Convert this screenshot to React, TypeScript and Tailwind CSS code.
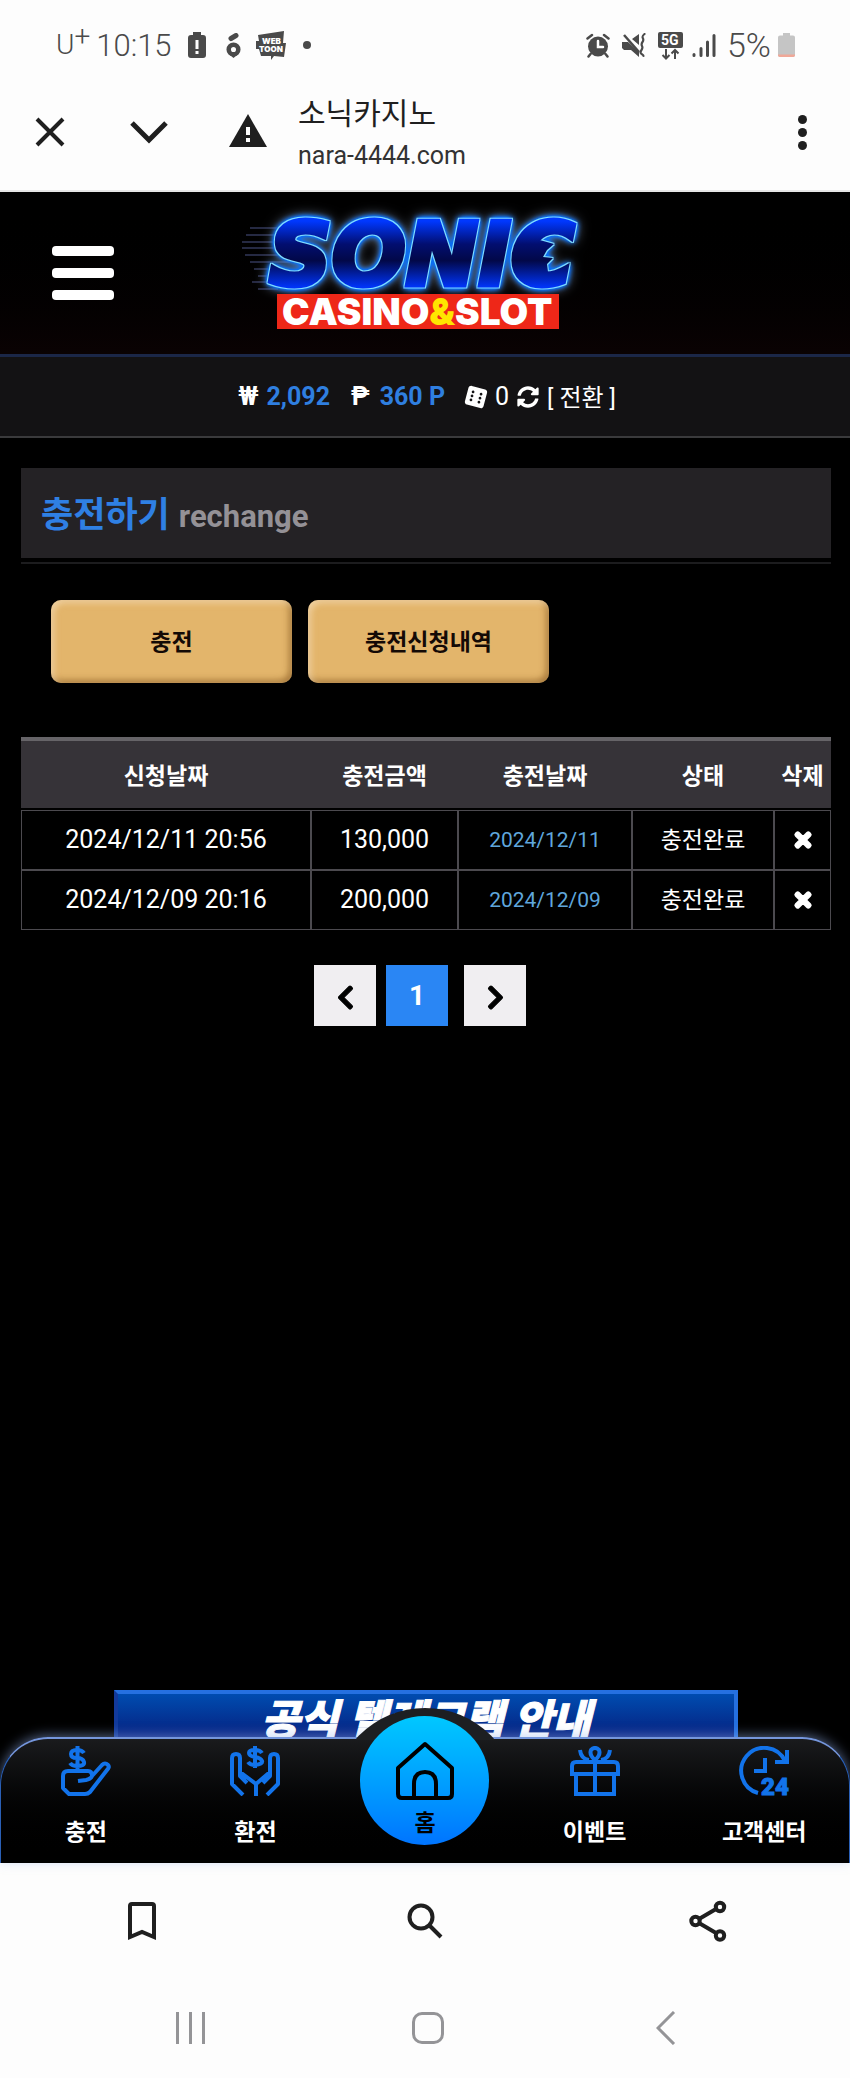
import React from 'react';
import { FaChevronLeft, FaChevronRight, FaDiceSix, FaSyncAlt, FaTimes } from 'react-icons/fa';

const RECHARGES = [
  { requested: '2024/12/11 20:56', amount: '130,000', charged: '2024/12/11', status: '충전완료' },
  { requested: '2024/12/09 20:16', amount: '200,000', charged: '2024/12/09', status: '충전완료' },
];

const StatusBar: React.FC = () => (
  <div className="flex h-[90px] items-center justify-between pl-[56px] pr-[55px] font-light leading-none text-[#4a4a4a]">
    <div className="flex items-center text-[31px]">
      <span className="flex items-start text-[28px]">
        U<span className="-mt-2">+</span>
      </span>
      <span className="ml-[6px]">10:15</span>
      <svg className="ml-[16px] h-[26px] w-[18px]" viewBox="0 0 18 26" fill="#4a4a4a">
        <path d="M5 0h8v3h2a3 3 0 0 1 3 3v17a3 3 0 0 1-3 3H3a3 3 0 0 1-3-3V6a3 3 0 0 1 3-3h2z" />
        <path d="M7.5 8h3v9h-3zM7.5 19h3v3h-3z" fill="#fff" />
      </svg>
      <svg className="ml-[20px] h-[25px] w-[15px]" viewBox="0 0 15 25" fill="none" stroke="#4a4a4a">
        <circle cx="7.5" cy="16.5" r="4.8" strokeWidth="4.5" />
        <path d="M5 5.500l5-3" strokeWidth="5" strokeLinecap="round" />
        <path d="M4 22h7l-3.500 3z" fill="#4a4a4a" stroke="none" />
      </svg>
      <svg className="ml-[14px] h-[30px] w-[32px]" viewBox="0 0 32 30" fill="#4a4a4a">
        <path d="M3 5L29 1l-1 12h3l-2 14-10-1-3 4v-4L6 26 4 19H1v-8h3z" />
        <text x="7" y="14" fill="#fff" fontSize="8" fontWeight="900" fontFamily="Inter, sans-serif">WEB</text>
        <text x="4" y="22" fill="#fff" fontSize="8" fontWeight="900" fontFamily="Inter, sans-serif">TOON</text>
      </svg>
      <span className="ml-[16px] h-2 w-2 rounded-full bg-[#4a4a4a]" />
    </div>
    <div className="flex items-center text-[34px]">
      <svg className="h-[25px] w-[24px]" viewBox="0 0 24 25" fill="none" stroke="#4a4a4a" strokeLinecap="round">
        <circle cx="12" cy="13.5" r="10" fill="#4a4a4a" stroke="none" />
        <path d="M1.500 5.500L6 2M22.500 5.500L18 2M4.500 21L2.500 23.500M19.500 21l2 2.500" strokeWidth="2.5" />
        <path d="M12 8v6h5" stroke="#fff" strokeWidth="2.5" />
      </svg>
      <svg className="ml-[12px] h-[25px] w-[24px]" viewBox="0 0 24 25" fill="#4a4a4a">
        <path d="M0 9h6l11 10v5l-8-7H2l-2-2zM10 6l7-5v11z" />
        <path d="M2 2l15 17" stroke="#4a4a4a" strokeWidth="2.500" />
        <path d="M22.500 1c-5 4 1 4-2 8s2 4-1 8 2 4 2 6" fill="none" stroke="#4a4a4a" strokeWidth="2.2" strokeLinecap="round" />
      </svg>
      <svg className="ml-[12px] h-[29px] w-[25px]" viewBox="0 0 25 29" fill="#4a4a4a">
        <rect x="0" y="1" width="25" height="16" rx="2" />
        <text x="3" y="14" fill="#fff" fontSize="14" fontWeight="700" fontFamily="Roboto, sans-serif">5G</text>
        <path d="M8 18v9M4.500 24L8 27.500l3.500-3.500M17 28v-8M13.500 22.500L17 19l3.500 3.500" fill="none" stroke="#4a4a4a" strokeWidth="2" />
      </svg>
      <svg className="ml-[9px] h-[25px] w-[24px]" viewBox="0 0 24 25" fill="none" stroke="#4a4a4a" strokeWidth="3" strokeLinecap="round">
        <path d="M2 21.500v1M9 15.500v7M15.500 9v13.500M22 2.500v20" />
      </svg>
      <span className="ml-[11px]">5%</span>
      <svg className="ml-[7px] h-[24px] w-[17px]" viewBox="0 0 17 24">
        <path d="M5 0h7v2.500h3a2 2 0 0 1 2 2V22a2 2 0 0 1-2 2H2a2 2 0 0 1-2-2V4.500a2 2 0 0 1 2-2h3z" fill="#c5c5c5" />
        <path d="M0 21.500h17a2 2 0 0 1-2 2.500H2a2 2 0 0 1-2-2.500z" fill="#f0a898" />
      </svg>
    </div>
  </div>
);

const BrowserBar: React.FC = () => (
  <div className="flex h-[102px] items-center border-b-2 border-[#e6e6e6] pb-[16px] pl-[35px] pr-[43px] text-[#1f1f1f]">
    <button aria-label="닫기">
      <svg className="h-[30px] w-[30px]" viewBox="0 0 30 30" fill="none" stroke="currentColor" strokeWidth="4">
        <path d="M2 2l26 26M28 2L2 28" />
      </svg>
    </button>
    <button aria-label="내리기" className="ml-[65px]">
      <svg className="h-[24px] w-[38px]" viewBox="0 0 38 24" fill="none" stroke="currentColor" strokeWidth="5">
        <path d="M2 3l17 17L36 3" />
      </svg>
    </button>
    <svg className="mb-1 ml-[61px] h-[33px] w-[38px]" viewBox="0 0 38 33" fill="currentColor">
      <path d="M19 0l19 33H0z" />
      <path d="M17 13h4v8h-4zM17 24h4v4h-4z" fill="#fff" />
    </svg>
    <div className="ml-[31px] grow pt-1">
      <p className="text-[30px] leading-[44px]">소닉카지노</p>
      <p className="text-[25px] leading-[40px] text-[#333]">nara-4444.com</p>
    </div>
    <button aria-label="메뉴 더보기" className="flex flex-col gap-1">
      <span className="h-[9px] w-[9px] rounded-full bg-current" />
      <span className="h-[9px] w-[9px] rounded-full bg-current" />
      <span className="h-[9px] w-[9px] rounded-full bg-current" />
    </button>
  </div>
);

const Logo: React.FC = () => (
  <svg className="h-[133px] w-[370px] overflow-visible" viewBox="0 0 370 133">
    <defs>
      <linearGradient id="sonicFill" gradientUnits="userSpaceOnUse" x1="0" y1="14" x2="0" y2="80">
        <stop offset="0" stopColor="#0038ff" />
        <stop offset="0.35" stopColor="#020e70" />
        <stop offset="0.6" stopColor="#020848" />
        <stop offset="1" stopColor="#0034f8" />
      </linearGradient>
      <filter id="neon" x="-15%" y="-20%" width="130%" height="140%" colorInterpolationFilters="sRGB">
        <feGaussianBlur in="SourceAlpha" stdDeviation="7" result="wide" />
        <feFlood floodColor="#a9bede" floodOpacity="0.9" />
        <feComposite in2="wide" operator="in" result="haze" />
        <feGaussianBlur in="SourceAlpha" stdDeviation="3" result="near" />
        <feComponentTransfer in="near" result="nearHard">
          <feFuncA type="linear" slope="3" />
        </feComponentTransfer>
        <feFlood floodColor="#0b6df0" />
        <feComposite in2="nearHard" operator="in" result="halo" />
        <feMorphology in="SourceAlpha" operator="dilate" radius="1" result="edge" />
        <feFlood floodColor="#7fdcff" />
        <feComposite in2="edge" operator="in" result="line" />
        <feMerge>
          <feMergeNode in="haze" />
          <feMergeNode in="halo" />
          <feMergeNode in="line" />
          <feMergeNode in="SourceGraphic" />
        </feMerge>
      </filter>
    </defs>
    <path
      d="M10 21h40M6 28h44M2 35h44M2 41h44M5 48h42M10 55h40M14 62h26M18 69h20M12 75h20M18 82h20"
      stroke="#4b5284"
      strokeWidth="1"
    />
    <g filter="url(#neon)" fill="url(#sonicFill)">
      <text
        x="29"
        y="78"
        stroke="url(#sonicFill)"
        strokeWidth="5"
        fontFamily="'DejaVu Sans', sans-serif"
        fontSize="87"
        fontWeight="700"
        fontStyle="italic"
      >
        SONIC
      </text>
      <path d="M296 32l18 5-7 6-4 7 10 1-6 6 1 8-14 2-7-15z" />
    </g>
    <rect x="37" y="87" width="282" height="35" fill="#ee2718" />
    <text x="42" y="118" fill="#fff" fontFamily="Inter, sans-serif" fontSize="37" fontWeight="900">
      CASINO<tspan fill="#ffe600">&amp;</tspan>SLOT
    </text>
  </svg>
);

const SiteHeader: React.FC = () => (
  <header className="grid h-[165px] grid-cols-[1fr_auto_1fr] items-center border-b-[3px] border-[#1b2748] bg-gradient-to-b from-black to-[#0a0203] pl-[52px] pr-[52px]">
    <button aria-label="전체 메뉴" className="flex w-[62px] flex-col gap-3">
      <span className="h-[10px] rounded-sm bg-white" />
      <span className="h-[10px] rounded-sm bg-white" />
      <span className="h-[10px] rounded-sm bg-white" />
    </button>
    <a href="#" aria-label="Sonic Casino & Slot">
      <Logo />
    </a>
  </header>
);

const BalanceBar: React.FC = () => (
  <div className="flex h-[81px] items-center justify-center border-b-2 border-[#3a3a3c] bg-[#131214] pl-1 text-[25px] text-white">
    <span className="font-bold">₩</span>
    <span className="ml-2 font-bold text-[#2f7fe0]">2,092</span>
    <span className="ml-[21px] font-bold">₱</span>
    <span className="ml-[10px] font-bold text-[#2f7fe0]">360 P</span>
    <FaDiceSix className="ml-[20px] h-[22px] w-[22px] rotate-15" />
    <span className="ml-2">0</span>
    <button className="flex items-center">
      <FaSyncAlt className="ml-2 mr-2 h-[22px] w-[22px]" />
      <span className="pt-[2px] text-[24px]">[ 전환 ]</span>
    </button>
  </div>
);

const GoldButton: React.FC<{ children: React.ReactNode }> = ({ children }) => (
  <button className="h-[83px] w-[241px] rounded-[10px] bg-[#e3b56b] pt-[3px] text-[23px] font-bold text-[#140a06] shadow-[inset_3px_3px_6px_rgba(255,240,215,0.5),inset_-3px_-3px_6px_rgba(120,75,20,0.55)]">
    {children}
  </button>
);

const RechargeTable: React.FC = () => (
  <table className="mt-[54px] w-full table-fixed border-separate border-spacing-0 text-center text-[25px] text-white">
    <colgroup>
      <col />
      <col className="w-[147px]" />
      <col className="w-[174px]" />
      <col className="w-[142px]" />
      <col className="w-[57px]" />
    </colgroup>
    <thead>
      <tr className="h-[73px] text-[23px]">
        {['신청날짜', '충전금액', '충전날짜', '상태', '삭제'].map((label) => (
          <th key={label} className="whitespace-nowrap border-b-2 border-t-4 border-b-black border-t-[#666468] bg-[#363338] p-0 pt-[6px] font-bold">
            {label}
          </th>
        ))}
      </tr>
    </thead>
    <tbody className="[&_td]:border [&_td]:border-[#4c4a4f] [&_td]:p-0">
      {RECHARGES.map((row) => (
        <tr key={row.requested} className="h-[60px]">
          <td>{row.requested}</td>
          <td>{row.amount}</td>
          <td className="text-[21px] text-[#5fa6dc]">
            <span className="block pt-[2px]">{row.charged}</span>
          </td>
          <td className="text-[23px]">
            <span className="block pt-[2px]">{row.status}</span>
          </td>
          <td>
            <button aria-label="삭제" className="block w-full">
              <FaTimes className="mx-auto h-[22px] w-[22px] stroke-current stroke-[50]" />
            </button>
          </td>
        </tr>
      ))}
    </tbody>
  </table>
);

const Pagination: React.FC = () => (
  <div className="mt-[35px] flex justify-center pr-[12px]">
    <button aria-label="이전" className="flex h-[61px] w-[62px] items-center justify-center bg-[#f0eef1] pt-[3px] text-black">
      <FaChevronLeft className="h-[27px] w-[27px] stroke-current stroke-[20]" />
    </button>
    <button className="ml-[10px] h-[61px] w-[62px] bg-[#2a86f4] text-[28px] font-bold text-white">1</button>
    <button aria-label="다음" className="ml-4 flex h-[61px] w-[62px] items-center justify-center bg-[#f0eef1] pt-[3px] text-black">
      <FaChevronRight className="h-[27px] w-[27px] stroke-current stroke-[20]" />
    </button>
  </div>
);

const ICON = 'mx-auto h-[50px] w-[50px] fill-none stroke-[#1273ea] stroke-4';

const RechargeIcon = () => (
  <svg className={ICON} viewBox="0 0 50 50" strokeLinejoin="round">
    <path d="M17 35l8-1q5-1 6-4l10-11q3-3 6 0 2 2-1 5L29 46q-2 2-5 2H8l-6-6V30q0-5 5-5h20q4 0 4 5" />
    <path d="M23 7q-2-3-7-3-6 0-6 4t6 4 7 4-7 4q-5 0-7-3M16.500 0v24" />
  </svg>
);

const WithdrawIcon = () => (
  <svg className={ICON} viewBox="0 0 50 50" strokeLinejoin="round">
    <path d="M13 49L2 38V12q0-4 4-4t4 4v14l16 12v12M10 26v4l7 7M37 49l11-11V12q0-4-4-4t-4 4v14L26 38M40 26v4l-7 7" />
    <path d="M32 7q-2-3-7-3-6 0-6 3t6 4 7 4-7 4q-5 0-7-3M25 0v22" />
  </svg>
);

const EventIcon = () => (
  <svg className={ICON} viewBox="0 0 50 50">
    <path d="M2 28v-8q0-4 4-4h38q4 0 4 4v8z" />
    <path d="M6 28v20h38V28M25 15v33M25 14q-6-5-4-10 4-4 8 0 2 5-4 10zM10 4q1 9 9 10M40 4q-1 9-9 10" />
  </svg>
);

const SupportIcon = () => (
  <svg className={ICON} viewBox="0 0 50 50">
    <path d="M19 47A23 23 0 1 1 46 15M48 4v12H36M26 12v13H15" />
    <text x="22" y="49" className="fill-[#1273ea] stroke-[#1273ea] stroke-1" fontSize="24" fontWeight="900" fontFamily="Roboto, sans-serif">24</text>
  </svg>
);

const NavItem: React.FC<{ label: string; icon: React.ReactNode }> = ({ label, icon }) => (
  <a href="#" className="pt-[7px] text-center text-[23px] font-bold leading-[34px] text-white">
    {icon}
    <span className="mt-5 block">{label}</span>
  </a>
);

const BottomNav: React.FC = () => (
  <nav className="relative grid h-[126px] grid-cols-5 rounded-t-[48px] border-x border-t-2 border-x-[#2a5fb5] border-t-[#7596dc] bg-gradient-to-b from-[#1a1b1d] to-black shadow-[0_-2px_12px_rgba(150,180,240,0.5)]">
    <div className="absolute bottom-[123px] left-1/2 h-[32px] w-[138px] -translate-x-1/2 overflow-hidden">
      <div className="absolute left-1/2 h-[186px] w-[186px] -translate-x-1/2 rounded-full bg-[#1d1f22]" />
    </div>
    <NavItem label="충전" icon={<RechargeIcon />} />
    <NavItem label="환전" icon={<WithdrawIcon />} />
    <a
      href="#"
      className="relative z-10 mx-auto -mt-[23px] flex h-[129px] w-[129px] flex-col items-center rounded-full bg-gradient-to-b from-[#00c8ff] to-[#0074ff] pt-[25px] text-[23px] font-bold leading-[34px] text-black"
    >
      <svg className="h-[60px] w-[60px]" viewBox="0 0 60 60" fill="none" stroke="currentColor" strokeWidth="4" strokeLinejoin="round">
        <path d="M7 57q-4 0-4-4V27L30 3l27 24v26q0 4-4 4zM19 57V43q0-12 11-12t11 12v14" />
      </svg>
      <span className="mt-[6px]">홈</span>
    </a>
    <NavItem label="이벤트" icon={<EventIcon />} />
    <NavItem label="고객센터" icon={<SupportIcon />} />
  </nav>
);

const BrowserToolbar: React.FC = () => (
  <div className="grid h-[115px] grid-cols-3 items-center justify-items-center text-[#1f1f1f]">
    <button aria-label="북마크">
      <svg className="h-[38px] w-[30px]" viewBox="0 0 30 38" fill="none" stroke="currentColor" strokeWidth="4">
        <path d="M3 35V4q0-2 2-2h20q2 0 2 2v31l-12-5z" />
      </svg>
    </button>
    <button aria-label="검색">
      <svg className="h-[36px] w-[36px]" viewBox="0 0 36 36" fill="none" stroke="currentColor" strokeWidth="4">
        <circle cx="14" cy="14" r="11.5" />
        <path d="M22 22l12 12" />
      </svg>
    </button>
    <button aria-label="공유">
      <svg className="h-[42px] w-[38px]" viewBox="0 0 38 42" fill="none" stroke="currentColor" strokeWidth="4">
        <circle cx="31" cy="7" r="4.2" />
        <circle cx="6.5" cy="21" r="4.2" />
        <circle cx="31" cy="35.5" r="4.2" />
        <path d="M10 19l17-10M10 23l17 10" />
      </svg>
    </button>
  </div>
);

const SystemNav: React.FC = () => (
  <div className="grid h-[100px] grid-cols-3 items-center justify-items-center pl-[71px] pr-[65px] text-[#949497]">
    <button aria-label="최근 앱" className="flex gap-[10px]">
      <span className="h-[32px] w-[3px] bg-current" />
      <span className="h-[32px] w-[3px] bg-current" />
      <span className="h-[32px] w-[3px] bg-current" />
    </button>
    <button aria-label="홈 화면" className="h-[32px] w-[32px] rounded-[10px] border-[3px] border-current" />
    <button aria-label="뒤로">
      <svg className="h-[34px] w-[20px]" viewBox="0 0 20 34" fill="none" stroke="currentColor" strokeWidth="3">
        <path d="M18 1L2 17l16 16" />
      </svg>
    </button>
  </div>
);

export default function App() {
  return (
    <div className="flex min-h-screen flex-col bg-[#fdfdfd] font-[Roboto,'Noto_Sans_CJK_KR',sans-serif]">
      <StatusBar />
      <BrowserBar />
      <div className="flex grow flex-col bg-black">
        <SiteHeader />
        <BalanceBar />
        <main className="flex grow flex-col pl-[21px] pr-[19px] pt-[30px]">
          <div className="border-b-2 border-[#1c1c1e] pb-1">
            <h1 className="flex h-[90px] items-center gap-[9px] bg-[#242225] px-5 pt-[6px] text-[35px] font-bold text-[#2f80e4]">
              충전하기 <small className="pt-[2px] text-[31px] text-[#949196]">rechange</small>
            </h1>
          </div>
          <div className="mt-9 flex gap-4 pl-[30px]">
            <GoldButton>충전</GoldButton>
            <GoldButton>충전신청내역</GoldButton>
          </div>
          <RechargeTable />
          <Pagination />
          <div className="mx-auto mt-auto h-[47px] w-[77%] overflow-hidden border-x-4 border-t-4 border-[#2570e0] border-l-[#123a9c] bg-gradient-to-b from-[#004cb0] to-[#062080] text-center text-[42px] font-black italic leading-[54px] text-white [-webkit-text-stroke:1px_white]">
            공식 텔레그램 안내
          </div>
        </main>
        <BottomNav />
      </div>
      <BrowserToolbar />
      <SystemNav />
    </div>
  );
}
